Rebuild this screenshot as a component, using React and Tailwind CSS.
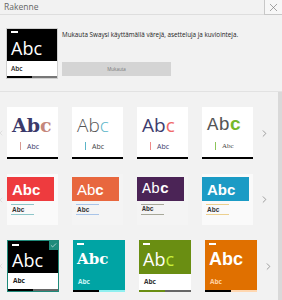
import { ChevronRight, ChevronLeft, X, Check } from "lucide-react";

const ui = { fontFamily: '"Open Sans", "Noto Sans", sans-serif' };
const slab = { fontFamily: '"DejaVu Serif", serif' };
const mono = { fontFamily: '"Liberation Mono", monospace' };
const sans = { fontFamily: '"Open Sans", sans-serif' };
const arial = { fontFamily: '"Liberation Sans", sans-serif' };
const serif = { fontFamily: '"Liberation Serif", serif' };

const PlainCard = ({ ab, c, bar, font, weight, cWeight, small, smallFont }) => (
  <div className="w-[51px] h-[52px] bg-white flex flex-col border-b-2 border-black">
    <div
      className={`pl-[5px] pt-[7px] text-[19px] leading-[22px] ${weight}`}
      style={font}
    >
      <span style={{ color: ab }}>Ab</span>
      <span className={cWeight} style={{ color: c }}>c</span>
    </div>
    <div className="flex flex-row items-center gap-[6px] pl-[13px] pt-[6px]">
      <div className="w-px h-[8px]" style={{ background: bar }} />
      <span className="text-[7px] leading-none" style={{ color: small, ...smallFont }}>
        Abc
      </span>
    </div>
  </div>
);

const BlockCard = ({ bg, line, font, weight, cWeight, textured }) => (
  <div
    className={`w-[51px] h-[51px] flex flex-col ${textured ? "bg-[#f4f4f4]" : "bg-[#fafafa]"}`}
  >
    <div
      className={`mt-[3px] w-[47px] h-[24px] flex items-center pl-[5px] text-white text-[15px] leading-none ${weight}`}
      style={{ background: bg, ...font }}
    >
      Ab<span className={cWeight}>c</span>
    </div>
    <div className="ml-[4px] mt-[3px] w-[23px] flex flex-col">
      <div className="h-px" style={{ background: line }} />
      <span className="text-[6.5px] leading-[9px] text-[#333] pl-px font-semibold" style={font}>
        Abc
      </span>
      <div className="h-px" style={{ background: line }} />
    </div>
  </div>
);

const BoldCard = ({ top, bottom, abColor, cColor, small, barL, barR, font, size, weight, selected }) => (
  <div
    className={`relative w-[52px] h-[52px] flex flex-col ${selected ? "border border-[#1f8a7a]" : ""}`}
  >
    <div className="flex-1 flex flex-col px-[4px] pt-[3px]" style={{ background: top }}>
      <div className="w-[7px] h-[2px] bg-white" />
      <div className={`${size} leading-[20px] mt-[4px] ${weight}`} style={font}>
        <span style={{ color: abColor }}>Ab</span>
        <span style={{ color: cColor }}>c</span>
      </div>
    </div>
    <div
      className="h-[16px] flex items-center pl-[5px] text-[6.5px] font-bold"
      style={{ background: bottom, color: small, ...sans }}
    >
      Abc
    </div>
    <div className="h-[2px] flex flex-row">
      <div className="w-1/2" style={{ background: barL }} />
      <div className="w-1/2" style={{ background: barR }} />
    </div>
    {selected && (
      <div className="absolute top-0 right-0 w-[9px] h-[9px] bg-[#1f8a7a] flex items-center justify-center">
        <Check size={7} color="#fff" strokeWidth={2} />
      </div>
    )}
  </div>
);

const Row = ({ children }) => (
  <div className="flex flex-row items-center">
    <div className="w-[7px] flex justify-start">
      <ChevronLeft size={8} color="#d6d6d6" className="-ml-[3px]" />
    </div>
    <div className="flex flex-row gap-[14px]">{children}</div>
    <div className="ml-[6px]">
      <ChevronRight size={11} color="#777" strokeWidth={1.5} />
    </div>
  </div>
);

export default function App() {
  return (
    <div className="w-[282px] h-[300px] bg-[#f2f2f2] flex flex-col overflow-hidden" style={ui}>
      <div className="h-[15px] flex flex-row">
        <div className="flex-1 border-b border-[#dedede] pl-[4px] text-[8.5px] leading-[14px] text-[#666]">
          Rakenne
        </div>
        <div className="w-[18px] border-l border-b border-[#c8c8c8] bg-[#f7f7f7] flex items-center justify-center">
          <X size={13} color="#777" strokeWidth={1.2} />
        </div>
      </div>

      <div className="h-[77px] flex flex-row pl-[6px] pt-[13px] border-b border-[#e2e2e2]">
        <div className="w-[52px] h-[51px] flex flex-col border border-[#cfcfcf]">
          <div className="flex-1 bg-black flex flex-col px-[4px] pt-[2px]">
            <div className="w-[7px] h-[2px] bg-white" />
            <div className="text-white text-[18px] leading-[20px] mt-[5px] font-medium" style={sans}>
              Abc
            </div>
          </div>
          <div className="h-[15px] bg-white flex items-center pl-[4px] text-[6.5px] font-semibold text-[#222]">
            Abc
          </div>
          <div className="h-[2px] flex flex-row">
            <div className="w-1/2 bg-black" />
            <div className="w-1/2 bg-[#777]" />
          </div>
        </div>
        <div className="flex flex-col ml-[4px]">
          <div className="text-[6.3px] leading-[8px] text-[#222] pt-[3px]">
            Mukauta Swaysi käyttämällä värejä, asetteluja ja kuviointeja.
          </div>
          <div className="mt-[23px] w-[109px] h-[14px] bg-[#d4d4d4] flex items-center justify-center text-[4.5px] text-[#777]">
            Mukauta
          </div>
        </div>
      </div>

      <div className="flex-1 flex flex-row">
        <div className="flex-1 flex flex-col gap-[15px] pt-[15px]">
          <Row>
            <PlainCard ab="#3b3a6b" c="#c4877c" bar="#d99a93" font={slab} weight="font-bold" small="#3b3a6b" smallFont={sans} />
            <PlainCard ab="#555" c="#5bb5c8" bar="#5bb5c8" font={sans} weight="font-light" small="#444" smallFont={sans} />
            <PlainCard ab="#3d3c6e" c="#f06a6a" bar="#f08a8a" font={sans} weight="font-normal" small="#3d3c6e" smallFont={sans} />
            <PlainCard ab="#555" c="#76b82a" bar="#8cc55a" font={mono} weight="font-normal" cWeight="font-bold" small="#444" smallFont={serif} />
          </Row>
          <Row>
            <BlockCard bg="#ee3b3e" line="#8ec6c9" font={arial} weight="font-bold" />
            <BlockCard bg="#e8673e" line="#a9c4e8" font={arial} weight="font-normal" cWeight="font-bold" textured />
            <BlockCard bg="#4b2456" line="#a7a89a" font={mono} weight="font-normal" cWeight="font-bold" textured />
            <BlockCard bg="#1b9bc5" line="#ecd08f" font={arial} weight="font-bold" />
          </Row>
          <Row>
            <BoldCard top="#000" bottom="#fff" abColor="#fff" cColor="#fff" small="#222" barL="#000" barR="#666" font={sans} size="text-[18px]" weight="font-medium" selected />
            <BoldCard top="#00a4a4" bottom="#00a4a4" abColor="#fff" cColor="#fff" small="#c8f4f4" barL="#000" barR="#8ff0f0" font={slab} size="text-[15px]" weight="font-bold" />
            <BoldCard top="#6a8e12" bottom="#fff" abColor="#fff" cColor="#c8f03a" small="#333" barL="#6a8e12" barR="#666" font={sans} size="text-[18px]" weight="font-normal" />
            <BoldCard top="#e07000" bottom="#e07000" abColor="#fff" cColor="#fff" small="#ffd0a0" barL="#000" barR="#ffd7b0" font={arial} size="text-[18px]" weight="font-bold" />
          </Row>
        </div>
        <div className="w-[4px] bg-[#d9d9d9]" />
      </div>
    </div>
  );
}
